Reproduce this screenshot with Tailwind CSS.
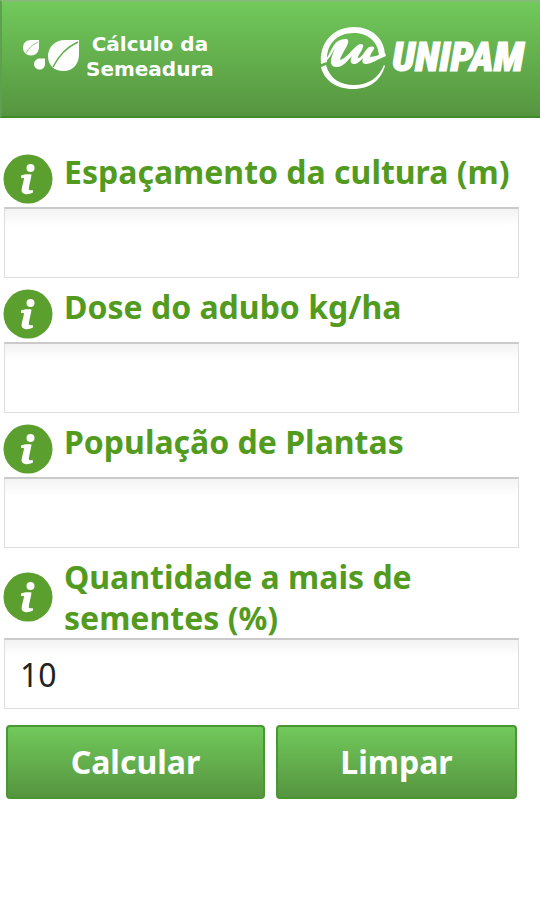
<!DOCTYPE html>
<html lang="pt-BR">
<head>
  <meta charset="UTF-8" />
  <meta name="viewport" content="width=device-width, initial-scale=1.0"/>
  <title>Cálculo da Semeadura</title>
  <script src="https://cdn.jsdelivr.net/npm/@tailwindcss/browser@4"></script>
</head>
<body class="min-h-screen bg-white font-['Noto_Sans',sans-serif]">
  <!-- info icon, reused by every field -->
  <svg class="hidden">
    <symbol id="info" viewBox="0 0 50 50">
      <circle cx="25" cy="25" r="24.5" fill="#5b9f2e"/>
      <circle cx="27.500" cy="14" r="4" fill="#fff"/>
      <path d="M18 21.500c3-1 6.500-1.500 10.500-1-.5 5-2.500 10.500-2.700 14.500 0 1.500 2 1.500 4 1l.2 2.500c-3 1.500-6 2-8 1.500-3-.6-3.800-2.500-3.300-5 .5-4 2-7.500 2.300-10.800-1-.2-2-.2-3 0z" fill="#fff"/>
    </symbol>
  </svg>

  <header class="flex h-[118px] items-center justify-between border-t-2 border-b-2 border-l-2 border-t-[#86ba78] border-b-[#3f8a29] border-l-[#5fa050] bg-linear-to-b from-[#71c95b] to-[#569540] pl-5 pr-4 text-white">
    <div class="flex items-center gap-1 pb-1">
      <svg class="h-9 w-[60px]" viewBox="0 0 60 36" fill="none">
        <g fill="#fff">
          <path d="M17 1v7c0 5-3.500 8.500-8 8.500S1 13 1 9C1 4 4 1 9 1z"/>
          <path d="M23 19.500V25c0 3.500-2.500 5.500-5.500 5.500S12 28 12 25s2.500-5.500 6-5.500z"/>
          <path d="M57 1v14c0 10-6 17-15.500 17S26 26 26 17 33 1 43 1z"/>
        </g>
        <path d="M4 14C7 9 10 6 16 3" stroke="#8cc87b"/>
        <path d="M31 28C37 16 45 8 56 3" stroke="#62b14d" stroke-width="1.500"/>
      </svg>
      <h1 class="text-center font-['DejaVu_Sans',sans-serif] text-[20px] leading-[25px] font-bold">Cálculo da<br>Semeadura</h1>
    </div>
    <div class="flex items-center gap-1.5">
      <svg class="size-[66px]" viewBox="0 0 66 66" fill="#fff">
        <path d="M1 38C-1 17 13 1 34 1c18 0 31 12 31 29l-6 1C59 17 49 7 34 7 16 7 6 19 7 36z"/>
        <path d="M1 41l5-2c4 14 14 20 28 20 14 0 25-7 30-20l1 1C61 54 50 63 33 63 16 63 4 54 1 41z"/>
        <path d="M1 38C9 34 11 19 18 15c4-2 9-3 10-1 2 4-7 14-8 20 6-1 12-11 18-15 3-2 6-1 5 2-1 4-5 8-5 11 4 0 7-8 11-11 3-1 6-1 5 2-2 3-4 6-4 8 5 0 10-3 15-4l1 3c-8 3-15 8-20 8-4 0-4-3-3-6-4 4-6 6-9 6-4 0-4-4-2-8-5 5-9 11-15 11-7 0-7-5-5-11l3-8c-3 5-6 13-13 15z"/>
      </svg>
      <span class="pb-1 font-['Liberation_Sans_Narrow','Roboto_Condensed','Liberation_Sans',sans-serif] text-[41px] leading-10 font-black italic [-webkit-text-stroke:1px_white]">UNIPAM</span>
    </div>
  </header>

  <form class="flex flex-col gap-2 pt-[33px] pr-[21px] pl-1">
    <div>
      <label for="espacamento" class="flex min-h-14 gap-[11px] text-[32px] leading-[41px] font-bold text-[#529b1f]">
        <svg class="-ml-px size-[50px] shrink-0 self-center"><use href="#info"/></svg>
        <span>Espaçamento da cultura (m)</span>
      </label>
      <input id="espacamento" type="text" class="block h-[71px] w-full border border-t-2 border-[#dedede] border-t-[#cacaca] bg-linear-to-b from-[#f3f3f3] to-white to-25% px-[15px] text-[32px] text-[#222] outline-none">
    </div>
    <div>
      <label for="dose" class="flex min-h-14 gap-[11px] text-[32px] leading-[41px] font-bold text-[#529b1f]">
        <svg class="-ml-px size-[50px] shrink-0 self-center"><use href="#info"/></svg>
        <span>Dose do adubo kg/ha</span>
      </label>
      <input id="dose" type="text" class="block h-[71px] w-full border border-t-2 border-[#dedede] border-t-[#cacaca] bg-linear-to-b from-[#f3f3f3] to-white to-25% px-[15px] text-[32px] text-[#222] outline-none">
    </div>
    <div>
      <label for="populacao" class="flex min-h-14 gap-[11px] text-[32px] leading-[41px] font-bold text-[#529b1f]">
        <svg class="-ml-px size-[50px] shrink-0 self-center"><use href="#info"/></svg>
        <span>População de Plantas</span>
      </label>
      <input id="populacao" type="text" class="block h-[71px] w-full border border-t-2 border-[#dedede] border-t-[#cacaca] bg-linear-to-b from-[#f3f3f3] to-white to-25% px-[15px] text-[32px] text-[#222] outline-none">
    </div>
    <div>
      <label for="quantidade" class="flex min-h-14 gap-[11px] text-[32px] leading-[41px] font-bold text-[#529b1f]">
        <svg class="-ml-px size-[50px] shrink-0 self-center"><use href="#info"/></svg>
        <span>Quantidade a mais de<br>sementes (%)</span>
      </label>
      <input id="quantidade" type="text" value="10" class="block h-[71px] w-full border border-t-2 border-[#dedede] border-t-[#cacaca] bg-linear-to-b from-[#f3f3f3] to-white to-25% px-[15px] text-[32px] text-[#222] outline-none">
    </div>
    <div class="mt-2 mr-0.5 ml-0.5 flex gap-[11px]">
      <button type="button" class="h-[74px] grow-[259] basis-0 rounded border-2 border-[#4a9631] bg-linear-to-b from-[#71c95b] to-[#569540] text-[32px] font-bold text-white">Calcular</button>
      <button type="reset" class="h-[74px] grow-[241] basis-0 rounded border-2 border-[#4a9631] bg-linear-to-b from-[#71c95b] to-[#569540] text-[32px] font-bold text-white">Limpar</button>
    </div>
  </form>
</body>
</html>
